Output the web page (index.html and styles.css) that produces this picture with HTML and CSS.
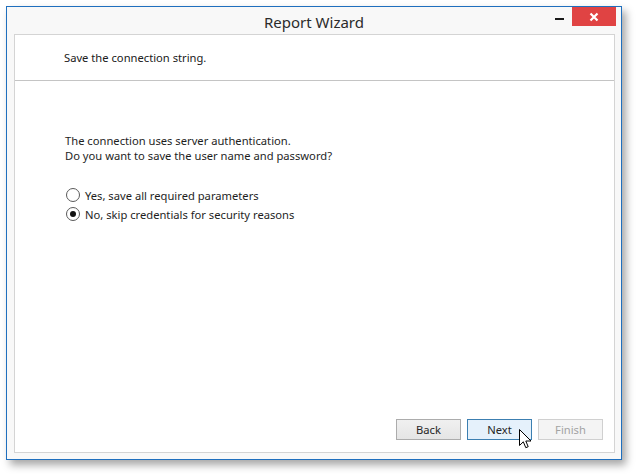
FILE: index.html
```html
<!DOCTYPE html>
<html>
<head>
<meta charset="utf-8">
<link rel="stylesheet" href="styles.css">
</head>
<body>
<div class="stage">
  <div class="window">
    <div class="titlebar">
      <div></div>
      <div class="title">Report Wizard</div>
      <div class="controls">
        <div class="min"><span></span></div>
        <div class="close">
          <svg width="10" height="10" viewBox="0 0 10 10"><path d="M1.5 1.5 L8.5 8.5 M8.5 1.5 L1.5 8.5" stroke="#fff" stroke-width="2.2"/></svg>
        </div>
      </div>
    </div>
    <div class="panel">
      <div class="header">Save the connection string.</div>
      <div class="content">
        <p class="question">The connection uses server authentication.<br>Do you want to save the user name and password?</p>
        <div class="options">
          <label class="option"><span class="radio"></span>Yes, save all required parameters</label>
          <label class="option"><span class="radio checked"></span>No, skip credentials for security reasons</label>
        </div>
      </div>
      <div class="footer">
        <div class="btn">Back</div>
        <div class="btn hover">Next
          <svg class="cursor" width="14" height="21" viewBox="0 0 14 21"><path d="M0.5 0.5 L0.5 16.5 L4.3 12.8 L6.8 18.7 L9.2 17.7 L6.8 12 L12 12 Z" fill="#fff" stroke="#000" stroke-width="1" stroke-linejoin="miter"/></svg>
        </div>
        <div class="btn disabled">Finish</div>
      </div>
    </div>
  </div>
</div>
</body>
</html>
```
FILE: styles.css
```css
html, body {
  margin: 0;
  padding: 0;
  background: #ffffff;
}
body {
  font-family: "Segoe UI", "Noto Sans", "Open Sans", sans-serif;
  font-size: 11.2px;
  color: #1e1e1e;
}
.stage {
  padding: 6px 14px 14px 6px;
  width: 616px;
}
.window {
  width: 614px;
  height: 452px;
  border: 1px solid #1f6fbe;
  background: #f8f8f8;
  box-shadow: 4px 5px 8px rgba(0,0,0,0.35);
  display: flex;
  flex-direction: column;
}
.titlebar {
  height: 27px;
  display: grid;
  grid-template-columns: 1fr auto 1fr;
  align-items: start;
}
.title {
  font-size: 15px;
  line-height: 18px;
  padding-top: 6px;
  color: #2b2b2b;
}
.controls {
  display: flex;
  justify-content: flex-end;
  align-items: flex-start;
  padding-right: 5px;
}
.min {
  width: 24px;
  height: 19px;
  display: flex;
  align-items: center;
  justify-content: center;
  margin-right: 1px;
}
.min span {
  display: block;
  width: 9px;
  height: 2px;
  background: #1a1a1a;
  margin-top: 5px;
}
.close {
  width: 44px;
  height: 19px;
  background: #e04343;
  display: flex;
  align-items: center;
  justify-content: center;
}
.panel {
  flex: 1;
  margin: 0 6px 6px 7px;
  border: 1px solid #d4d4d4;
  background: #ffffff;
  display: flex;
  flex-direction: column;
}
.header {
  height: 45px;
  border-bottom: 1px solid #c4c4c4;
  padding-left: 49px;
  line-height: 16px;
  display: flex;
  align-items: center;
  color: #202020;
}
.content {
  flex: 1;
  padding: 52px 0 0 50px;
}
.question {
  margin: 0;
  line-height: 15px;
}
.options {
  margin-top: 24px;
  display: flex;
  flex-direction: column;
  gap: 3px;
}
.option {
  display: flex;
  align-items: center;
  height: 16px;
  margin-left: 1px;
}
.radio {
  width: 12px;
  height: 12px;
  border: 1px solid #5a5a5a;
  border-radius: 50%;
  background: #fff;
  margin-right: 5px;
  display: flex;
  align-items: center;
  justify-content: center;
}
.radio.checked::after {
  content: "";
  width: 6px;
  height: 6px;
  border-radius: 50%;
  background: #111;
}
.footer {
  display: flex;
  justify-content: flex-end;
  gap: 6px;
  padding: 0 11px 12px 0;
}
.btn {
  position: relative;
  width: 63px;
  height: 19px;
  border: 1px solid #acacac;
  background: linear-gradient(#f0f0f0, #e5e5e5);
  display: flex;
  align-items: center;
  justify-content: center;
  color: #262626;
}
.btn.hover {
  border-color: #3c7fb1;
  background: #e5f1fb;
}
.btn.disabled {
  border-color: #d0d0d0;
  background: #f4f4f4;
  color: #a3a3a3;
}
.cursor {
  position: absolute;
  left: 51px;
  top: 9px;
}
```
